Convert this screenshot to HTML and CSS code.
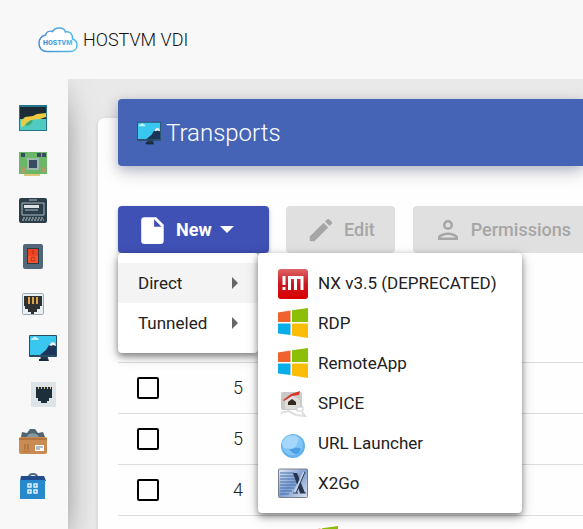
FILE: index.html
```html
<!DOCTYPE html>
<html lang="en">
<head>
<meta charset="utf-8">
<title>HOSTVM VDI</title>
<link rel="stylesheet" href="styles.css">
</head>
<body>
<svg class="defs" aria-hidden="true">
  <defs>
    <linearGradient id="sky" x1="0" x2="1"><stop offset="0" stop-color="#4b8bd0"/><stop offset="1" stop-color="#4fbcf2"/></linearGradient>
    <linearGradient id="red" x2="0" y2="1"><stop offset="0" stop-color="#df6464"/><stop offset=".5" stop-color="#c91820"/><stop offset="1" stop-color="#db0000"/></linearGradient>
    <linearGradient id="steel" x2="1" y2="1"><stop offset="0" stop-color="#e4ebf5"/><stop offset=".5" stop-color="#7f9dd0"/><stop offset="1" stop-color="#dbe5ef"/></linearGradient>
    <symbol id="monitor" viewBox="0 0 28 28">
      <path fill="#22374e" d="M12 21h6l2 6h-9z"/>
      <rect width="28" height="22" y="1" rx="1" fill="#294c65"/>
      <path fill="#3ac7ef" d="M1 2h26v19H1z"/>
      <path fill="#1c3558" d="m11 21 6-5 3-5 4-2 3 3v9z"/>
      <path fill="#eaf6fb" d="m20 11 3-3 3 1 1 3-3-1-2 1z"/>
      <path fill="#c7f0fa" d="M2 6c0-2 2-2 2-2 1-2 4-1 4 0 2 0 2 2 1 2z"/>
      <path fill="#182a3c" d="M10 25h8l1 2h-9z"/>
    </symbol>
    <symbol id="windows" viewBox="0 0 30 30">
      <path fill="#f0632c" d="M0 4.500 12.500 2.500V14H0z"/><path fill="#8bbf08" d="M14 2.300 30 0v14H14z"/>
      <path fill="#09ade9" d="M0 15.500h12.500V27L0 25.500z"/><path fill="#fcbd08" d="M14 15.500h16V30l-16-2.500z"/>
    </symbol>
  </defs>
</svg>
<header class="topbar">
  <svg class="logo" viewBox="0 0 40 26" role="img" aria-label="HOSTVM cloud">
    <path fill="#fff" stroke="url(#sky)" stroke-width="1.500" d="M9 24.500C4 24.500 1 21 1 16.500c0-4 2.500-7.500 6.500-8.500 1-3 4-4.500 7-3.500C16 2 18.500 1 21 1c3.500 0 6 2 6.500 4 4-1 7.500 2 7 7 3 1 4.500 3.500 4.500 6 0 4-3 6.500-7 6.500z"/>
    <text class="logo-text" x="5" y="18" fill="url(#sky)">HOSTVM</text>
  </svg>
  <span>HOSTVM VDI</span>
</header>
<div class="layout">
  <nav class="sidebar" aria-label="Main">
    <a href="#" aria-label="Dashboard"><svg viewBox="0 0 28 28"><path fill="#27758a" d="M0 1h28v26H0z"/><path fill="#1c2c35" d="M1 3h26v12H1z"/><path fill="#4fcbc0" d="M1 15h26v11H1z"/><path fill="#edca42" d="M2 23v-6l4-4 8-1 4-2 9-1v4l-6 2-9 1-5 3-2 3z"/><path fill="#46a866" d="m7 20 5-4 2 1-3 4-4 1z"/></svg></a>
    <a href="#" aria-label="Services"><svg viewBox="0 0 28 28"><path fill="#6ab768" d="M0 2h28v22H0z"/><path fill="#dfc77a" d="M5 24h16v2H5z"/><path fill="#9db9a7" d="M8 8h12v12H8z"/><path fill="#3a4a60" d="M10 10h8v8h-8zM2 3h4v4H2zM18 3h4v4h-4zM23 3h4v4h-4z"/><path stroke="#9cb8a7" stroke-dasharray="1 1" d="M7 9h14M7 19h14M9 7v14M19 7v14"/><path fill="#b29a66" d="M2 17h4v6H2zM23 17h3v5h-3z"/></svg></a>
    <a href="#" aria-label="Authenticators"><svg viewBox="0 0 28 28"><rect width="28" height="25" y="2" rx="2" fill="#2d3e4b"/><path fill="none" stroke="#a9b9c1" d="M3 7h22v12H3zM10 4h8M6 14h13"/><path fill="#dce2e4" d="M5 9h15v3H5z"/><path stroke="#c1cbd0" stroke-dasharray="2 1" d="M4 22h20M3 24h22"/></svg></a>
    <a href="#" aria-label="Os managers"><svg viewBox="0 0 28 28"><rect x="4" y="2" width="20" height="25" rx="2" fill="#53677a"/><path fill="#2e3c48" d="M8 6h12v16H8z"/><path fill="#ee4422" d="M9 7h10v7H9z"/><path fill="#f8562a" d="M9 14h10v7H9z"/><path stroke="#a52b1b" d="M14 8v4"/><circle cx="14" cy="17" r="2" fill="none" stroke="#ba321d"/></svg></a>
    <a href="#" aria-label="Connectivity"><svg viewBox="0 0 28 28"><rect x="3.500" y="5.500" width="21" height="21" rx="1" fill="#e9f0f4" stroke="#9aabb6"/><path fill="#2f3032" d="M5 8h18v10h-2v3h-3v3h-3v2h-3v-2H9v-3H6v-3H5z"/><path stroke="#dda248" stroke-width="2" d="M10 9v7M14 9v7M18 9v7"/></svg></a>
    <a class="child" href="#" aria-label="Transports"><svg><use href="#monitor"/></svg></a>
    <a class="child" href="#" aria-label="Networks"><svg viewBox="0 0 28 28"><path fill="#dde4e7" d="M2 2h25v25H2z"/><path fill="#1d2f3a" d="M7 7h16v11h-3v3h-2v2h-6v-2H9v-3H7z"/><path stroke="#d7c690" stroke-width="2" stroke-dasharray="1 2" d="M9 8h13"/></svg></a>
    <a href="#" aria-label="Service pools"><svg viewBox="0 0 28 28"><path fill="#516571" d="m2 11 1-5 5 1 3-4h5l3 4 5-1 2 5z"/><path fill="#839aa5" d="M8 11c1-5 10-5 12 0z"/><rect y="11" width="28" height="17" rx="2" fill="#c98b51"/><path fill="#b3743e" d="M0 12h28v2H0zM4 25h7v1H4z"/><path stroke="#9b6538" d="M6 18v6M9 18v6"/><path fill="#fff" d="M16 19h9v6h-9z"/><path stroke="#737b83" d="M17 21h7M17 23h4"/></svg></a>
    <a href="#" aria-label="Tools"><svg viewBox="0 0 28 28"><path fill="none" stroke="#526c80" stroke-width="2" d="M10 5c0-4 8-4 8 0"/><path fill="#234c8d" d="M2 4h23l2 5H1z"/><path fill="#2788cc" d="M1 8h25v19H1z"/><path fill="none" stroke="#dff4ff" stroke-width="1.500" d="M9 12h3v3H9zM15 12h3v3h-3zM9 18h3v3H9zM15 18h3v3h-3z"/></svg></a>
  </nav>
  <main class="content">
    <section class="card">
      <h1 class="card-title"><svg><use href="#monitor"/></svg>Transports</h1>
      <div class="toolbar">
        <div class="dropdown">
          <button class="btn primary" type="button" aria-haspopup="menu" aria-expanded="true">
            <svg viewBox="0 0 28 28"><path fill="#fff" d="M6 2h11l7 7v15c0 2-1 3-3 3H6c-2 0-3-1-3-3V5c0-2 1-3 3-3z"/><path fill="#3f51b5" d="M15 4l7 7h-7z"/></svg>
            <span>New</span><i class="caret"></i>
          </button>
          <div class="menu main-menu" role="menu">
            <button class="active" type="button" role="menuitem">Direct<i class="arrow"></i></button>
            <button type="button" role="menuitem">Tunneled<i class="arrow"></i></button>
          </div>
          <div class="menu sub-menu" role="menu">
            <button type="button" role="menuitem"><svg viewBox="0 0 30 30"><rect width="30" height="30" y="1" rx="3" fill="url(#red)"/><path fill="none" stroke="#fff" stroke-width="3" d="M6 8v9M6 19v3M11.500 22V9.500H24V22M17.500 9v13"/></svg>NX v3.5 (DEPRECATED)</button>
            <button type="button" role="menuitem"><svg><use href="#windows"/></svg>RDP</button>
            <button type="button" role="menuitem"><svg><use href="#windows"/></svg>RemoteApp</button>
            <button type="button" role="menuitem"><svg viewBox="0 0 30 30"><rect x="3" y="4" width="21" height="18" rx="2" fill="#cbcac8"/><path fill="#deddda" d="m7 12 7-5 8 5v9H7z"/><path fill="#d6382b" d="m5 12 8-6 9-3-1 4-7 1-8 5z"/><path fill="#35281f" d="M10 14l4-3 4 3v3h-8z"/><path fill="none" stroke="#dedede" stroke-width="2" d="m3 25 7-2 8 4 9 1-3-4"/><path fill="#fff" stroke="#ccc" d="M19 19h6v4h-6z"/></svg>SPICE</button>
            <button type="button" role="menuitem"><svg viewBox="0 0 30 30"><circle cx="15" cy="18" r="12" fill="#63b2ef"/><circle cx="14.500" cy="17" r="10.500" fill="#81c4f6"/><path fill="#a5d7fb" d="M4 16C5 9 12 6 18 8l3 3-3 7-4 3-8-1z"/><path fill="#4a9fe3" d="M11 21c5 1 6-3 12 0l-2 4c-3 2-6 1-10-4z"/></svg>URL Launcher</button>
            <button type="button" role="menuitem"><svg viewBox="0 0 30 30"><rect x=".5" y="1" width="29" height="28.500" rx="1" fill="url(#steel)" stroke="#777f8c"/><path stroke="#4270ad" stroke-width="1" d="M2 5h14M2 8h15M2 11h16M2 14h17M2 17h16M2 20h14M2 23h12M2 26h9"/><path fill="#26344e" d="m15 5 4 0 8 20h-5z"/><path fill="none" stroke="#c5d3e8" stroke-width="2" d="M26 4 16 26"/><path stroke="#2d3b52" d="M27 4 18 25M15 25h5M22 25h6"/></svg>X2Go</button>
          </div>
        </div>
        <button class="btn" type="button" disabled><svg viewBox="0 0 24 24"><path d="M3 17.250V21h3.750L17.800 9.900l-3.700-3.700zM20.700 7a1 1 0 0 0 0-1.400l-2.300-2.300a1 1 0 0 0-1.400 0l-1.800 1.800 3.700 3.700z"/></svg><span>Edit</span></button>
        <button class="btn" type="button" disabled><svg viewBox="0 0 24 24"><path d="M12 6a2 2 0 1 1 0 4 2 2 0 0 1 0-4m0 10c2.700 0 5.800 1.300 6 2H6c.2-.7 3.300-2 6-2m0-12a4 4 0 1 0 0 8 4 4 0 0 0 0-8m0 10c-2.700 0-8 1.300-8 4v2h16v-2c0-2.700-5.300-4-8-4"/></svg><span>Permissions</span></button>
      </div>
      <table class="grid" aria-label="Transports">
        <tbody>
          <tr><td class="pick"><input type="checkbox" aria-label="Select row 1"></td><td class="num">5</td><td class="name"></td></tr>
          <tr><td class="pick"><input type="checkbox" aria-label="Select row 2"></td><td class="num">5</td><td class="name"></td></tr>
          <tr><td class="pick"><input type="checkbox" aria-label="Select row 3"></td><td class="num">4</td><td class="name"></td></tr>
          <tr><td class="pick"><input type="checkbox" aria-label="Select row 4"></td><td class="num"></td><td class="name"><svg><use href="#windows"/></svg></td></tr>
        </tbody>
      </table>
    </section>
  </main>
</div>
</body>
</html>
```
FILE: styles.css
```css
* { box-sizing: border-box; }
body {
  margin: 0;
  height: 100vh;
  overflow: hidden;
  display: flex;
  flex-direction: column;
  background: #f8f8f8;
  color: #212121;
  font: 400 18px/24px Roboto, sans-serif;
}
svg { display: block; flex: none; }
button { font: inherit; color: inherit; border: 0; }
.defs { position: absolute; width: 0; height: 0; }

.topbar {
  flex: none;
  height: 79px;
  padding-left: 38px;
  display: flex;
  align-items: center;
  gap: 5px;
  position: relative;
  z-index: 3;
  background: #f8f8f8;
  color: #111;
  font-weight: 300;
}
.logo { width: 40px; height: 26px; }
.logo-text { font: 900 7px Roboto, sans-serif; }

.layout { flex: 1; min-height: 0; display: flex; }
.sidebar {
  flex: none;
  width: 68px;
  padding-top: 16px;
  position: relative;
  z-index: 1;
  background: #f8f8f8;
  box-shadow: 0 16px 38px -12px #0009, 0 4px 25px #0001;
}
.sidebar a { display: flex; align-items: center; height: 46px; padding-left: 19px; }
.sidebar .child { padding-left: 29px; }
.sidebar svg { width: 28px; height: 28px; }

.content {
  flex: 1;
  min-width: 0;
  padding: 39px 0 0 30px;
  background: #e9e9e9;
}
.card {
  display: flow-root;
  min-height: 100%;
  padding-left: 20px;
  position: relative;
  z-index: 2;
  background: #fefefe;
  border-radius: 6px 0 0 0;
  box-shadow: 0 1px 4px #0002;
}
.card-title {
  margin: -19px 0 40px;
  height: 67px;
  padding-left: 18px;
  display: flex;
  align-items: center;
  gap: 4px;
  color: #fff;
  background: #4664b6;
  border-radius: 4px 0 0 4px;
  box-shadow: 0 6px 18px #0003, 0 3px 10px #3f51b533;
  font-size: 24px;
  font-weight: 300;
}
.card-title svg { width: 26px; height: 24px; }

.toolbar { display: flex; }
.dropdown { position: relative; margin-right: 17px; z-index: 1; }
.btn {
  flex: none;
  height: 47px;
  margin-right: 18px;
  padding: 0 20px;
  display: flex;
  align-items: center;
  gap: 8px;
  border-radius: 4px;
  background: #e0e0e0;
  color: #a6a6a6;
  font-weight: 500;
}
.btn svg { width: 30px; height: 30px; fill: currentColor; }
.btn.primary {
  width: 151px;
  margin: 0;
  color: #fff;
  background: #3f51b5;
  font-weight: 700;
  box-shadow: 0 2px 4px #0004;
}
.caret { border: 7px solid transparent; border-top-color: #fff; border-bottom: 0; }

.menu {
  position: absolute;
  top: 100%;
  padding: 10px 0;
  background: #fff;
  border-radius: 4px;
  box-shadow: 0 3px 6px #0006, 0 4px 14px #0003;
}
.main-menu { left: 0; width: 140px; }
.sub-menu { left: 140px; width: 264px; }
.menu button {
  width: 100%;
  height: 40px;
  padding: 0 20px;
  display: flex;
  align-items: center;
  gap: 10px;
  background: transparent;
  font-size: 17px;
  white-space: nowrap;
}
.menu .active { background: #f4f4f4; }
.menu svg { width: 30px; height: 30px; overflow: visible; }
.arrow { margin-left: auto; border: 6px solid transparent; border-left-color: #666; border-right: 0; }

.grid { width: 100%; margin-top: 109px; border-collapse: collapse; table-layout: fixed; font-weight: 300; }
.grid td { height: 51px; padding: 0; border-top: 1px solid #ddd; }
.grid .pick { width: 60px; padding-left: 19px; }
.grid .num { width: 65px; text-align: right; }
.grid .name { padding-left: 65px; }
.grid input {
  appearance: none;
  display: block;
  width: 22px;
  height: 22px;
  margin: 0;
  border: 2px solid #000;
  border-radius: 2px;
}
.name svg { width: 30px; height: 30px; }
```
